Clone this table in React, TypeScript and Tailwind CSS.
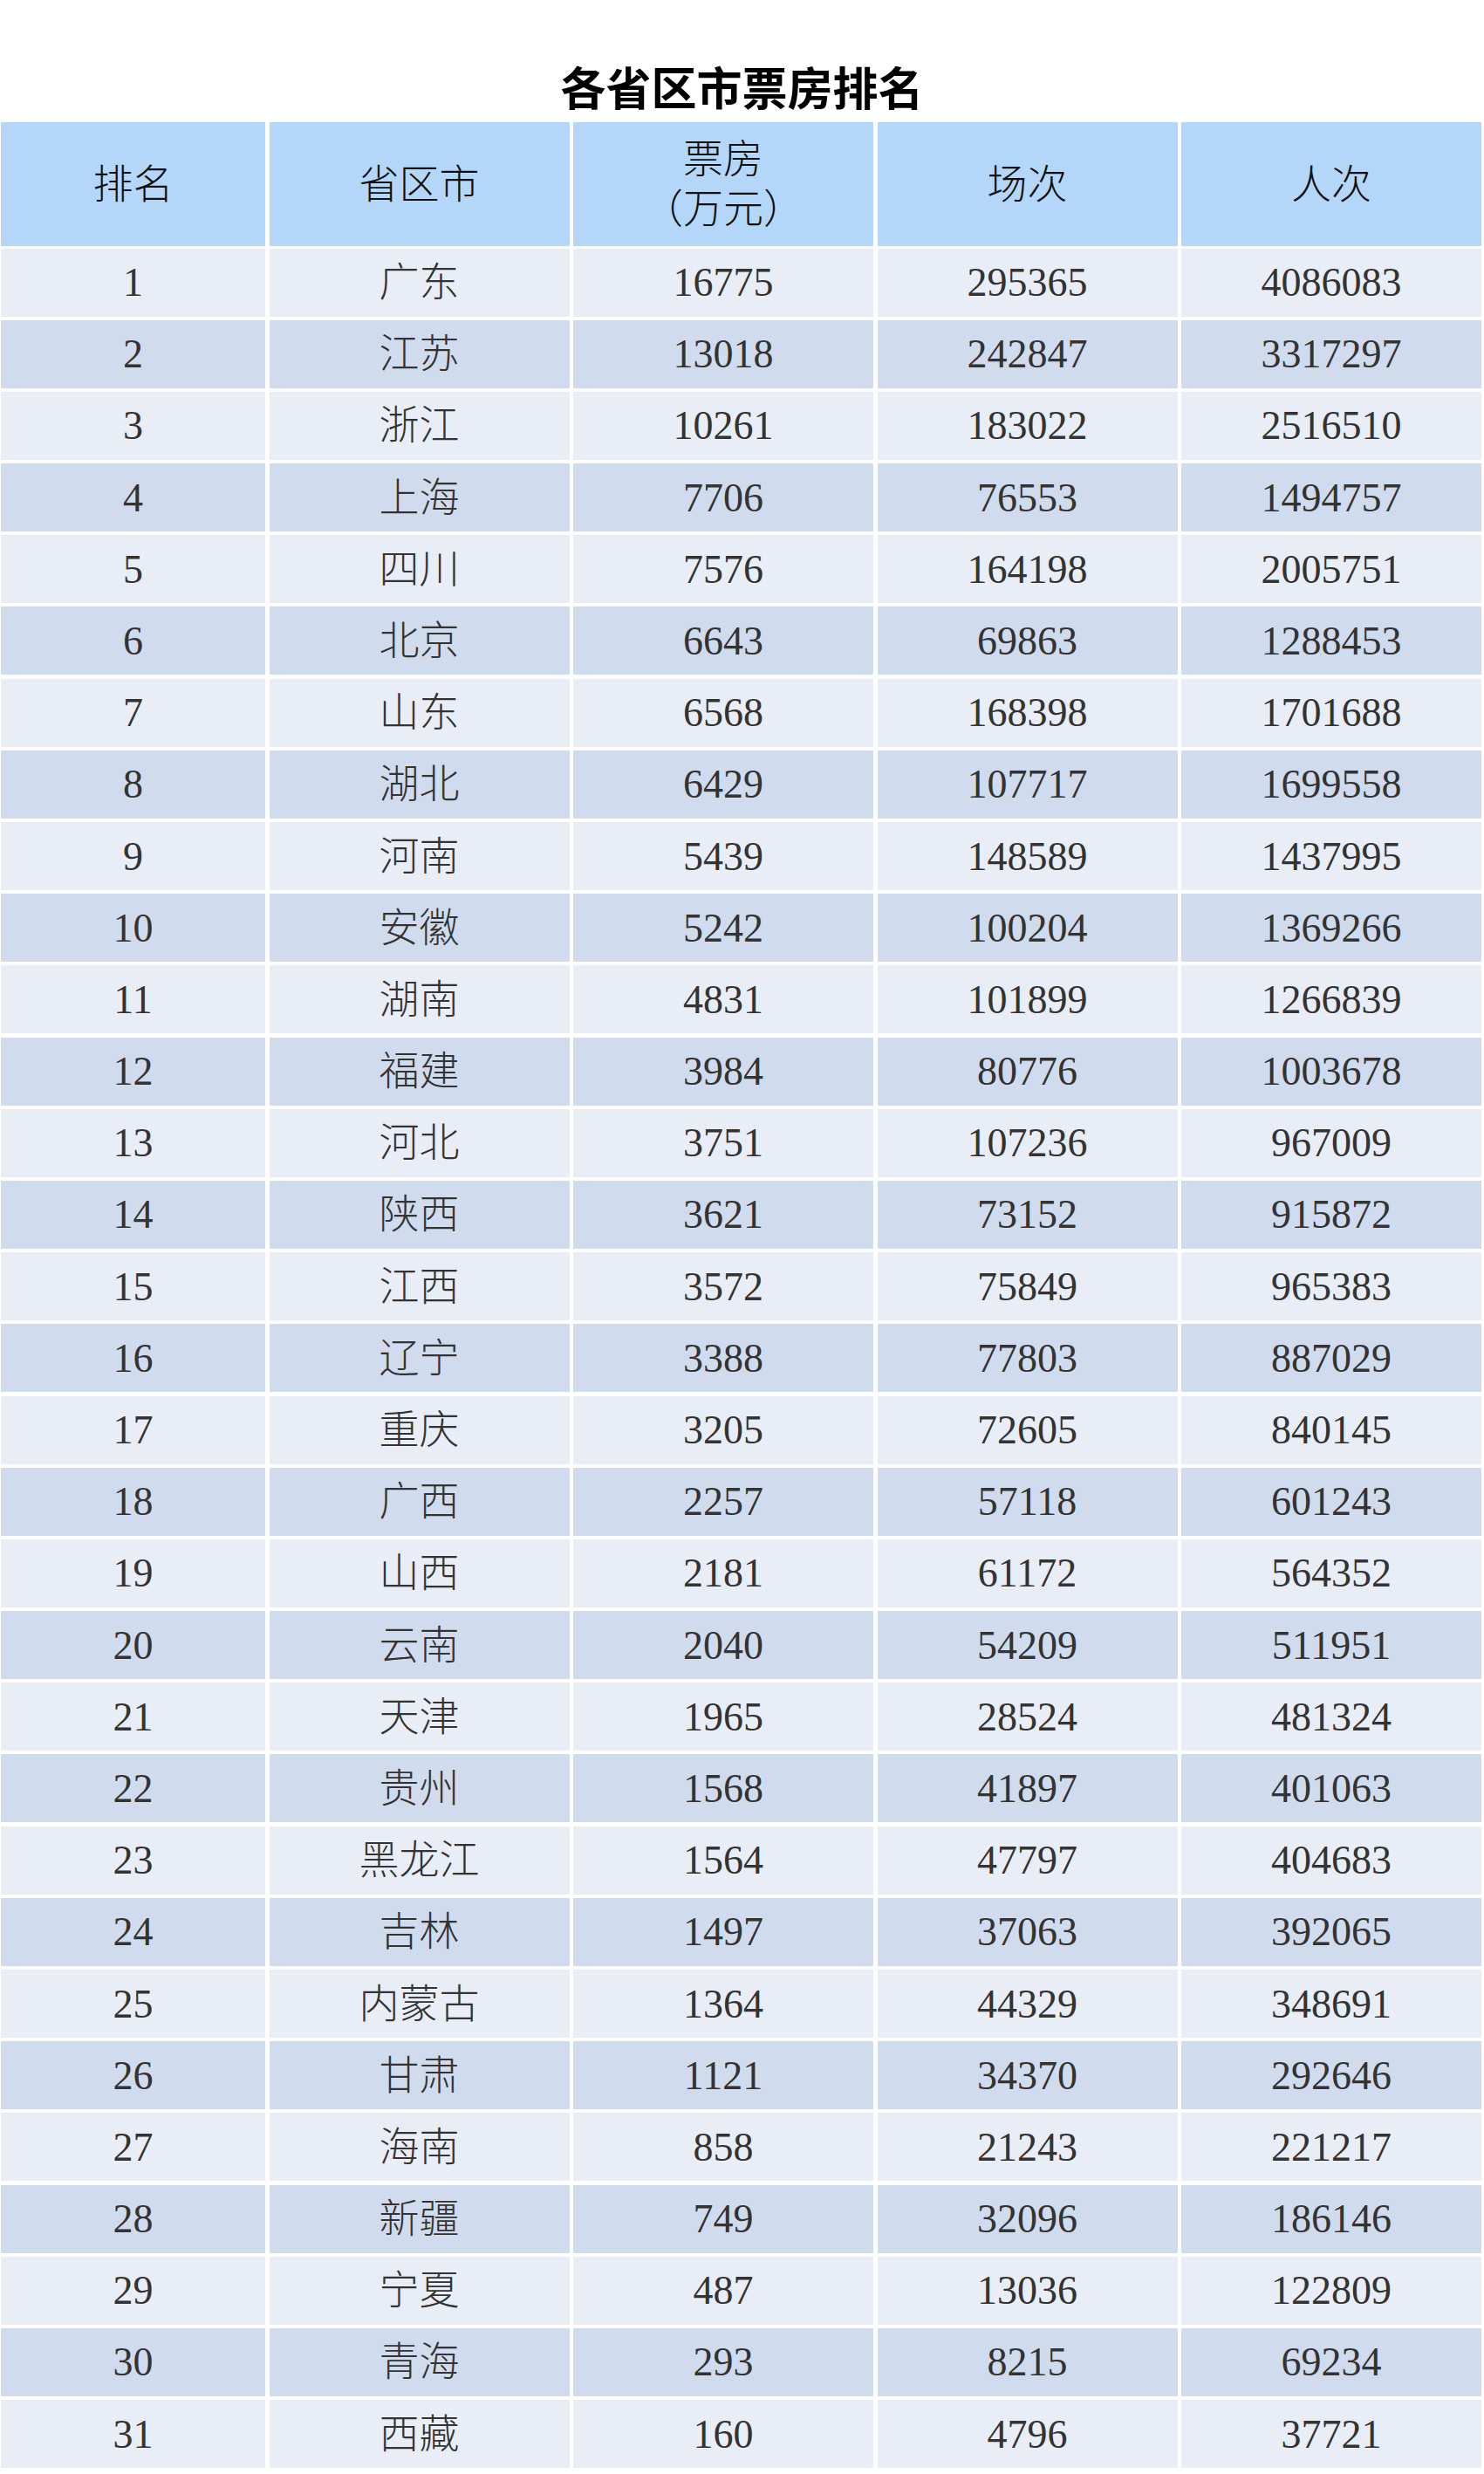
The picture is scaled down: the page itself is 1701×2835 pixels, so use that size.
import React from "react";

const rows: [string, string, string, string][] = [
  ["广东", "16775", "295365", "4086083"],
  ["江苏", "13018", "242847", "3317297"],
  ["浙江", "10261", "183022", "2516510"],
  ["上海", "7706", "76553", "1494757"],
  ["四川", "7576", "164198", "2005751"],
  ["北京", "6643", "69863", "1288453"],
  ["山东", "6568", "168398", "1701688"],
  ["湖北", "6429", "107717", "1699558"],
  ["河南", "5439", "148589", "1437995"],
  ["安徽", "5242", "100204", "1369266"],
  ["湖南", "4831", "101899", "1266839"],
  ["福建", "3984", "80776", "1003678"],
  ["河北", "3751", "107236", "967009"],
  ["陕西", "3621", "73152", "915872"],
  ["江西", "3572", "75849", "965383"],
  ["辽宁", "3388", "77803", "887029"],
  ["重庆", "3205", "72605", "840145"],
  ["广西", "2257", "57118", "601243"],
  ["山西", "2181", "61172", "564352"],
  ["云南", "2040", "54209", "511951"],
  ["天津", "1965", "28524", "481324"],
  ["贵州", "1568", "41897", "401063"],
  ["黑龙江", "1564", "47797", "404683"],
  ["吉林", "1497", "37063", "392065"],
  ["内蒙古", "1364", "44329", "348691"],
  ["甘肃", "1121", "34370", "292646"],
  ["海南", "858", "21243", "221217"],
  ["新疆", "749", "32096", "186146"],
  ["宁夏", "487", "13036", "122809"],
  ["青海", "293", "8215", "69234"],
  ["西藏", "160", "4796", "37721"],
];

export default function App() {
  return (
    <div className="w-[1701px] min-h-[2835px] bg-white">
      <div
        className="pt-[69px] h-[140px] text-center text-[52px] leading-[60px] font-bold text-black"
        style={{ fontFamily: '"Noto Sans CJK SC", "Noto Sans", sans-serif' }}
      >
        各省区市票房排名
      </div>
      <div
        className="ml-[1px] w-[1697px]"
        style={{ fontFamily: '"Liberation Serif", "Noto Sans CJK SC", serif' }}
      >
        <div className="grid grid-cols-[303px_repeat(4,1fr)] gap-x-[4.5px] h-[142px] text-[46px] text-[#111] font-light">
          <div className="bg-[#b4d7f9] flex items-center justify-center leading-[57px]">排名</div>
          <div className="bg-[#b4d7f9] flex items-center justify-center leading-[57px]">省区市</div>
          <div className="bg-[#b4d7f9] flex flex-col items-center justify-center leading-[57px]">
            <span>票房</span>
            <span>（万元）</span>
          </div>
          <div className="bg-[#b4d7f9] flex items-center justify-center leading-[57px]">场次</div>
          <div className="bg-[#b4d7f9] flex items-center justify-center leading-[57px]">人次</div>
        </div>
        <div className="mt-[2.5px] grid grid-cols-[303px_repeat(4,1fr)] gap-x-[4.5px] gap-y-[4.2px] text-[46px] text-[#333] font-light">
          {rows.map((r, i) => {
            const bg = i % 2 === 0 ? "bg-[#e8edf6]" : "bg-[#d0dcee]";
            return (
              <React.Fragment key={i}>
                <div className={`${bg} h-[78px] flex items-center justify-center leading-[57px]`}>{i + 1}</div>
                <div className={`${bg} h-[78px] flex items-center justify-center leading-[57px]`}>{r[0]}</div>
                <div className={`${bg} h-[78px] flex items-center justify-center leading-[57px]`}>{r[1]}</div>
                <div className={`${bg} h-[78px] flex items-center justify-center leading-[57px]`}>{r[2]}</div>
                <div className={`${bg} h-[78px] flex items-center justify-center leading-[57px]`}>{r[3]}</div>
              </React.Fragment>
            );
          })}
        </div>
      </div>
    </div>
  );
}
